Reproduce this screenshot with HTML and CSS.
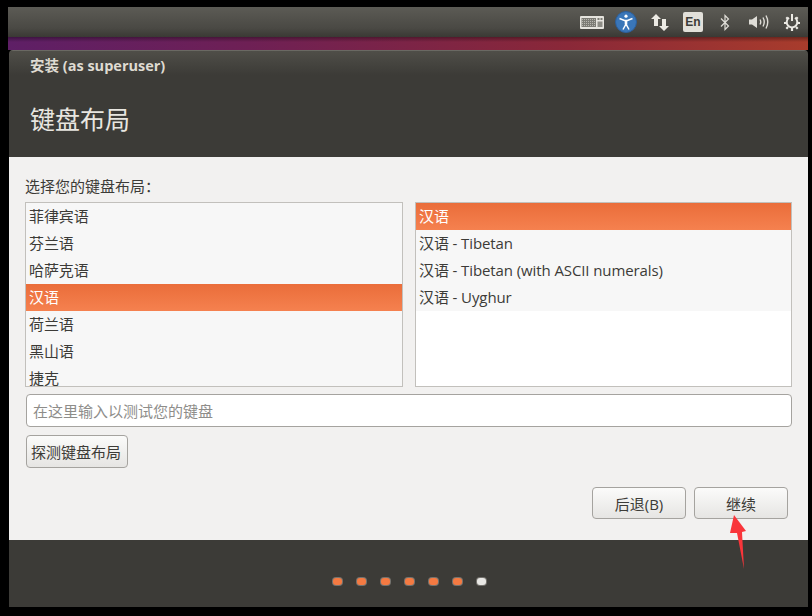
FILE: index.html
```html
<!DOCTYPE html>
<html lang="zh">
<head>
<meta charset="utf-8">
<title>安装</title>
<link rel="stylesheet" href="styles.css">
</head>
<body>
<div class="desktop">
  <div class="panel">
    <svg class="ic kb" width="24" height="13" viewBox="0 0 24 13"><rect width="24" height="13" rx="1" fill="#e6e4de"/><rect x="1.500" y="2" width="14.500" height="9" fill="#7d7c75"/><path d="M2 3.500 H15.500 M2 5.500 H15.500 M2 7.500 H15.500 M2 9.500 H15.500" stroke="#b9b7b0" stroke-width="1" stroke-dasharray="1 1"/><rect x="17.500" y="2" width="2" height="2" fill="#7d7c75"/><rect x="20.500" y="2" width="2" height="2" fill="#7d7c75"/><rect x="17.500" y="5.500" width="5" height="5.500" fill="#8d8c85"/></svg>
    <svg class="ic a11y" width="22" height="22" viewBox="0 0 22 22"><circle cx="11" cy="11" r="10.500" fill="#3a76b8" stroke="#2c5f9c"/><circle cx="11" cy="5.200" r="1.600" fill="#fff"/><path d="M4.500 7.500 L9.500 9.500 H12.500 L17.500 7.500 M11 9.500 V13 M11 13 L8 18.500 M11 13 L14 18.500" fill="none" stroke="#fff" stroke-width="1.500"/><rect x="9.700" y="9.500" width="2.600" height="4" fill="#fff"/></svg>
    <svg class="ic net" width="18" height="17" viewBox="0 0 18 17"><path d="M5 0 L10 5 H7 V12 H3 V5 H0Z M13 17 L8 12 H11 V5 H15 V12 H18Z" fill="#eceae4"/></svg>
    <span class="lang">En</span>
    <svg class="ic bt" width="10" height="17" viewBox="0 0 10 17"><path d="M1 4.500 L8.500 12 L5 15.500 V1.500 L8.500 5 L1 12.500" fill="none" stroke="#dfddd7" stroke-width="1.200"/></svg>
    <svg class="ic snd" width="21" height="16" viewBox="0 0 21 16"><path d="M0 5.500 H3 L8 2 V14 L3 10.500 H0Z" fill="#dfddd7"/><path d="M11 5.500 Q12.500 8 11 10.500 M14 3.500 Q16.500 8 14 12.500 M17 1.500 Q20.500 8 17 14.500" fill="none" stroke="#dfddd7" stroke-width="1.400"/></svg>
    <svg class="ic gear" width="16" height="17" viewBox="0 0 16 17"><path d="M5 3.800 A5.300 5.300 0 1 0 11 3.800 M8 0 V7" fill="none" stroke="#eceae4" stroke-width="2"/><path d="M0 9 H3 M13 9 H16 M8 14 V17 M2.300 3.300 L4 5 M13.700 3.300 L12 5 M2.300 14.700 L4 13 M13.700 14.700 L12 13" stroke="#eceae4" stroke-width="2.200"/></svg>
  </div>
  <div class="wallpaper"></div>
  <div class="window">
    <header class="head">
      <div class="win-title">安装 (as superuser)</div>
      <h1 class="page-title">键盘布局</h1>
    </header>
    <main class="content">
      <div class="prompt">选择您的键盘布局<span class="colon">：</span></div>
      <div class="lists">
        <div class="list">
          <div class="row">菲律宾语</div>
          <div class="row alt">芬兰语</div>
          <div class="row">哈萨克语</div>
          <div class="row sel">汉语</div>
          <div class="row">荷兰语</div>
          <div class="row alt">黑山语</div>
          <div class="row">捷克</div>
        </div>
        <div class="list">
          <div class="row sel">汉语</div>
          <div class="row alt">汉语 - Tibetan</div>
          <div class="row">汉语 - Tibetan (with ASCII numerals)</div>
          <div class="row alt">汉语 - Uyghur</div>
        </div>
      </div>
      <input class="test" type="text" placeholder="在这里输入以测试您的键盘">
      <button class="btn detect">探测键盘布局</button>
      <div class="actions">
        <button class="btn act">后退(B)</button>
        <button class="btn act">继续</button>
      </div>
      <svg class="arrow" width="17" height="55" viewBox="0 0 17 55"><path d="M4 0 L16 16 L12 17 L14 54 L7 18 L0 18Z" fill="#f9353a"/></svg>
    </main>
    <footer class="foot">
      <i class="dot"></i><i class="dot"></i><i class="dot"></i><i class="dot"></i><i class="dot"></i><i class="dot"></i><i class="dot cur"></i>
    </footer>
  </div>
</div>
</body>
</html>
```
FILE: styles.css
```css
* { box-sizing: border-box; }
html, body { margin: 0; height: 100%; background: #000; overflow: hidden; }
body { padding: 7px 4px 9px 8px; font-family: "Open Sans", "Noto Sans CJK SC", sans-serif; }
.desktop { width: 800px; height: 600px; display: flex; flex-direction: column; }
.panel { height: 30px; flex: none; display: flex; align-items: center; justify-content: flex-end; padding-right: 8px; background: linear-gradient(#5c5b55, #4a4944 70%, #3a3934); }
.ic { display: block; }
.kb { margin-right: 11px; }
.a11y { margin-right: 14px; }
.net { margin-right: 14px; }
.lang { margin-right: 17px; width: 20px; height: 20px; border-radius: 2px; background: #e2e0da; color: #3c3b37; font: 700 12px/20px "Liberation Sans", sans-serif; text-align: center; }
.bt { margin-right: 19px; }
.snd { margin-right: 14px; }
.wallpaper { height: 13px; flex: none; background: linear-gradient(rgba(0,0,0,.35), rgba(0,0,0,0) 5px), linear-gradient(90deg, #5e1f66, #6e2055 30%, #8a2838 70%, #a83c2c); }
.window { flex: 1; margin-left: 1px; display: flex; flex-direction: column; min-height: 0; position: relative; border-radius: 4px 4px 0 0; overflow: hidden; }
.head { height: 107px; flex: none; background: linear-gradient(#4f4e48, #3c3b37 24px); padding: 5px 21px 0; color: #dfdbd2; border-top: 1px solid #6a6963; }
.win-title { font-size: 14.500px; font-weight: 700; line-height: 19px; }
.page-title { margin: 26px 0 0; font-size: 25px; font-weight: 400; line-height: 36px; color: #e8e6e0; }
.content { flex: 1; min-height: 0; position: relative; background: #f2f1f0; padding: 19px 16px 0; color: #3c3b37; font-size: 15px; }
.prompt { height: 19px; line-height: 19px; }
.colon { font-family: "Noto Sans CJK TC", sans-serif; }
.lists { margin-top: 7px; display: flex; gap: 12px; }
.list { height: 185px; width: 378px; background: #fff; border: 1px solid #c2c0bc; overflow: hidden; }
.list + .list { width: 377px; }
.row { height: 27px; line-height: 27px; padding-left: 3px; background: #f7f7f7; color: #3c3b37; white-space: nowrap; letter-spacing: -.1px; }
.row.sel { background: linear-gradient(#ea6d3a, #f5814f); color: #fff; }
.test { display: block; margin: 7px 0 0 1px; width: 766px; height: 33px; border: 1px solid #a5a39f; border-radius: 4px; background: #fff; padding: 0 6px; font: 15px "Open Sans", "Noto Sans CJK SC", sans-serif; outline: none; }
.test::placeholder { color: #8e8d8a; opacity: 1; }
.btn { height: 33px; border: 1px solid #a5a39f; border-radius: 4px; background: linear-gradient(#fbfbfa, #e6e5e3); color: #3c3b37; font: 15px "Open Sans", "Noto Sans CJK SC", sans-serif; padding: 0; }
.detect { display: block; margin: 8px 0 0 1px; width: 102px; padding-right: 2px; }
.actions { margin-top: 19px; display: flex; justify-content: flex-end; gap: 8px; padding-right: 4px; }
.act { width: 94px; height: 32px; }
.arrow { position: absolute; left: 721px; top: 358px; }
.foot { height: 67px; flex: none; background: #3c3b37; display: flex; justify-content: center; gap: 15px; padding: 38px 0 0 2px; }
.dot { width: 9px; height: 7px; border-radius: 3px; background: #f47a42; box-shadow: 0 0 0 1px #75736e; }
.dot.cur { background: #e8e7e4; }
```
